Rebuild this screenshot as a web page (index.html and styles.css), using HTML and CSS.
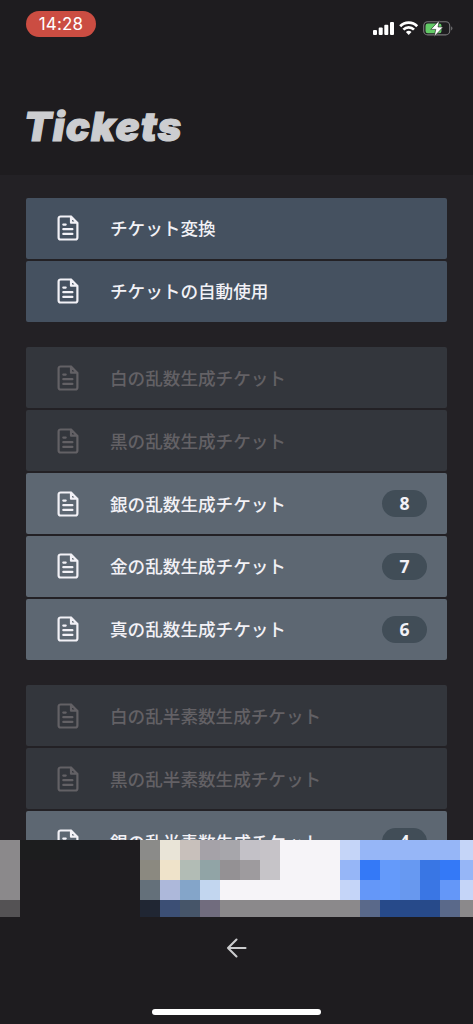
FILE: index.html
```html
<!DOCTYPE html>
<html lang="ja">
<head>
<meta charset="utf-8">
<title>Tickets</title>
<link rel="stylesheet" href="styles.css">
</head>
<body>
<svg class="defs" width="0" height="0">
  <symbol id="doc" viewBox="0 0 22 26">
    <path d="M14 1.500H3.600a2 2 0 0 0-2 2v19a2 2 0 0 0 2 2h14.800a2 2 0 0 0 2-2V8L14 1.500V7.700h6.300M6.300 9.600h2.400M6.300 14.200h9.100M6.300 18.900h9.100" fill="none" stroke="currentColor" stroke-width="2.200" stroke-linecap="round" stroke-linejoin="round"/>
  </symbol>
</svg>
<div class="screen">
  <header class="header">
    <div class="status">
      <span class="time">14:28</span>
      <svg class="indicators" width="82" height="18" viewBox="0 0 82 18">
        <g fill="#fff">
          <rect x="1" y="11" width="4" height="5" rx="1"/>
          <rect x="6.7" y="8.5" width="4" height="7.5" rx="1"/>
          <rect x="12.3" y="5.7" width="4" height="10.3" rx="1"/>
          <rect x="18" y="3" width="4" height="13" rx="1"/>
        </g>
        <g fill="none" stroke="#fff" stroke-width="2.7">
          <path d="M28.2 7.3a11.8 11.8 0 0 1 17 0"/>
          <path d="M31.4 10.6a7.4 7.4 0 0 1 10.6 0"/>
        </g>
        <path d="M33.9 13a4 4 0 0 1 5.6 0l-2.8 3z" fill="#fff"/>
        <rect x="51.7" y="2.7" width="26" height="13.2" rx="4" fill="none" stroke="#78777a" stroke-width="1.1"/>
        <path d="M79.2 7.2q2.5 2 0 4.4z" fill="#78777a"/>
        <rect x="53.5" y="4.5" width="16" height="9.7" rx="2.3" fill="#62ca66"/>
        <path d="M67.4 1.3 58.800 10.400h5L62.100 17.700 71.200 8h-5.200z" fill="#fff" stroke="#1e1c1f" stroke-width=".6"/>
      </svg>
    </div>
    <h1 class="title">Tickets</h1>
  </header>
  <main class="content">
    <section class="group">
      <div class="row action"><svg class="icon"><use href="#doc"/></svg><span class="label">チケット変換</span></div>
      <div class="row action"><svg class="icon"><use href="#doc"/></svg><span class="label">チケットの自動使用</span></div>
    </section>
    <section class="group">
      <div class="row disabled"><svg class="icon"><use href="#doc"/></svg><span class="label">白の乱数生成チケット</span></div>
      <div class="row disabled"><svg class="icon"><use href="#doc"/></svg><span class="label">黒の乱数生成チケット</span></div>
      <div class="row"><svg class="icon"><use href="#doc"/></svg><span class="label">銀の乱数生成チケット</span><span class="count">8</span></div>
      <div class="row"><svg class="icon"><use href="#doc"/></svg><span class="label">金の乱数生成チケット</span><span class="count">7</span></div>
      <div class="row"><svg class="icon"><use href="#doc"/></svg><span class="label">真の乱数生成チケット</span><span class="count">6</span></div>
    </section>
    <section class="group">
      <div class="row disabled"><svg class="icon"><use href="#doc"/></svg><span class="label">白の乱半素数生成チケット</span></div>
      <div class="row disabled"><svg class="icon"><use href="#doc"/></svg><span class="label">黒の乱半素数生成チケット</span></div>
      <div class="row"><svg class="icon"><use href="#doc"/></svg><span class="label">銀の乱半素数生成チケット</span><span class="count">4</span></div>
    </section>
  </main>
  <svg class="banner" width="473" height="77" viewBox="0 0 473 77" shape-rendering="crispEdges">
    <rect width="473" height="77" fill="#f6f4f8"/>
    <rect x="20" width="120" height="77" fill="#1e1c1f"/>
    <rect x="20" width="40" height="20" fill="#1c1d1e"/>
    <rect x="60" width="40" height="20" fill="#1b1c1f"/>
    <rect width="20" height="60" fill="#8b898b"/>
    <rect y="60" width="20" height="17" fill="#545254"/>
    <g>
      <rect x="140" width="20" height="20" fill="#8b8b89"/>
      <rect x="160" width="20" height="20" fill="#e9e4d7"/>
      <rect x="180" width="20" height="20" fill="#c8c0bb"/>
      <rect x="200" width="20" height="20" fill="#a5a2a8"/>
      <rect x="220" width="20" height="20" fill="#a7a6ab"/>
      <rect x="240" width="20" height="20" fill="#c3c1c7"/>
      <rect x="260" width="20" height="20" fill="#c6c3c8"/>
      <rect x="340" width="20" height="20" fill="#c5d5f8"/>
      <rect x="360" width="100" height="20" fill="#96b6f7"/>
      <rect x="460" width="13" height="20" fill="#c5d5f8"/>
    </g>
    <g transform="translate(0 20)">
      <rect x="140" width="20" height="20" fill="#8b8980"/>
      <rect x="160" width="20" height="20" fill="#efe3ca"/>
      <rect x="180" width="20" height="20" fill="#b2bcb5"/>
      <rect x="200" width="20" height="20" fill="#91a4a6"/>
      <rect x="220" width="20" height="20" fill="#949194"/>
      <rect x="240" width="20" height="20" fill="#9e9b9e"/>
      <rect x="260" width="20" height="20" fill="#c6c4c8"/>
      <rect x="340" width="20" height="20" fill="#96b6f7"/>
      <rect x="360" width="20" height="20" fill="#3479f7"/>
      <rect x="380" width="20" height="20" fill="#649afa"/>
      <rect x="400" width="20" height="20" fill="#6799f2"/>
      <rect x="420" width="20" height="20" fill="#3976e4"/>
      <rect x="440" width="20" height="20" fill="#3479f7"/>
      <rect x="460" width="13" height="20" fill="#96b6f7"/>
    </g>
    <g transform="translate(0 40)">
      <rect x="140" width="20" height="20" fill="#64707a"/>
      <rect x="160" width="20" height="20" fill="#adb8da"/>
      <rect x="180" width="20" height="20" fill="#84a5c9"/>
      <rect x="200" width="20" height="20" fill="#c2d6ef"/>
      <rect x="340" width="20" height="20" fill="#c5d5f8"/>
      <rect x="360" width="20" height="20" fill="#6497f8"/>
      <rect x="380" width="20" height="20" fill="#649afa"/>
      <rect x="400" width="20" height="20" fill="#6898ee"/>
      <rect x="420" width="20" height="20" fill="#3a76e4"/>
      <rect x="440" width="20" height="20" fill="#6497f8"/>
      <rect x="460" width="13" height="20" fill="#c5d5f8"/>
    </g>
    <g transform="translate(0 60)">
      <rect x="140" width="20" height="17" fill="#202633"/>
      <rect x="160" width="20" height="17" fill="#3c4f75"/>
      <rect x="180" width="20" height="17" fill="#465569"/>
      <rect x="200" width="20" height="17" fill="#716c7e"/>
      <rect x="220" width="140" height="17" fill="#8b898b"/>
      <rect x="360" width="20" height="17" fill="#5a698a"/>
      <rect x="380" width="60" height="17" fill="#274a8a"/>
      <rect x="440" width="20" height="17" fill="#5a698a"/>
      <rect x="460" width="13" height="17" fill="#8b898b"/>
    </g>
  </svg>
  <footer class="footer">
    <svg width="22" height="20" viewBox="0 0 22 20"><path d="M10.5 1.6 2 10l8.500 8.400M2 10h17.500" fill="none" stroke="#ccccce" stroke-width="2.100" stroke-linecap="round" stroke-linejoin="round"/></svg>
    <div class="home"></div>
  </footer>
</div>
</body>
</html>
```

FILE: styles.css
```css
* { box-sizing: border-box; }
body {
  margin: 0;
  background: #1e1c1f;
  font-family: "Noto Sans CJK JP", sans-serif;
}
.defs { display: block; height: 0; }
.screen {
  width: 473px;
  height: 1024px;
  display: flex;
  flex-direction: column;
  overflow: hidden;
}
.header { height: 175px; flex: none; }
.status {
  display: flex;
  justify-content: space-between;
  padding: 11px 19px 0 26px;
}
.time {
  width: 70px;
  height: 26px;
  border-radius: 13px;
  background: #cb4d42;
  color: #fff;
  font: 400 17px/26px Inter, sans-serif;
  letter-spacing: 0.2px;
  text-align: center;
}
.indicators { margin-top: 8px; }
.title {
  margin: 63px 0 0 24px;
  color: #cccdd0;
  font: italic 900 40px/54px Inter, sans-serif;
  letter-spacing: 1.2px;
  -webkit-text-stroke: 1.2px #cccdd0;
}
.content {
  height: 665px;
  flex: none;
  overflow: hidden;
  padding: 23px 26px 0;
  background: #232125;
  display: flex;
  flex-direction: column;
  gap: 25.6px;
}
.group {
  display: flex;
  flex-direction: column;
  gap: 2px;
}
.row {
  height: 60.9px;
  flex: none;
  display: flex;
  align-items: center;
  padding: 0 20px 0 31px;
  border-radius: 2px;
  background: #5d6772;
  color: #f2f1f6;
}
.row.action { background: #455160; }
.row.disabled { background: #33363c; color: #636165; }
.icon { width: 22px; height: 26px; flex: none; }
.label {
  margin-left: 31px;
  font-size: 17.6px;
  font-weight: 500;
  line-height: 26px;
  white-space: nowrap;
}
.count {
  width: 45px;
  height: 27px;
  margin-left: auto;
  border-radius: 14px;
  background: #414d57;
  font: 700 17.6px/27px "Noto Sans", sans-serif;
  text-align: center;
}
.banner { display: block; flex: none; }
.footer {
  flex: 1;
  display: flex;
  flex-direction: column;
  justify-content: space-between;
  align-items: center;
  padding: 21px 0 9px;
}
.home {
  width: 169px;
  height: 6px;
  border-radius: 3px;
  background: #fff;
}
```
